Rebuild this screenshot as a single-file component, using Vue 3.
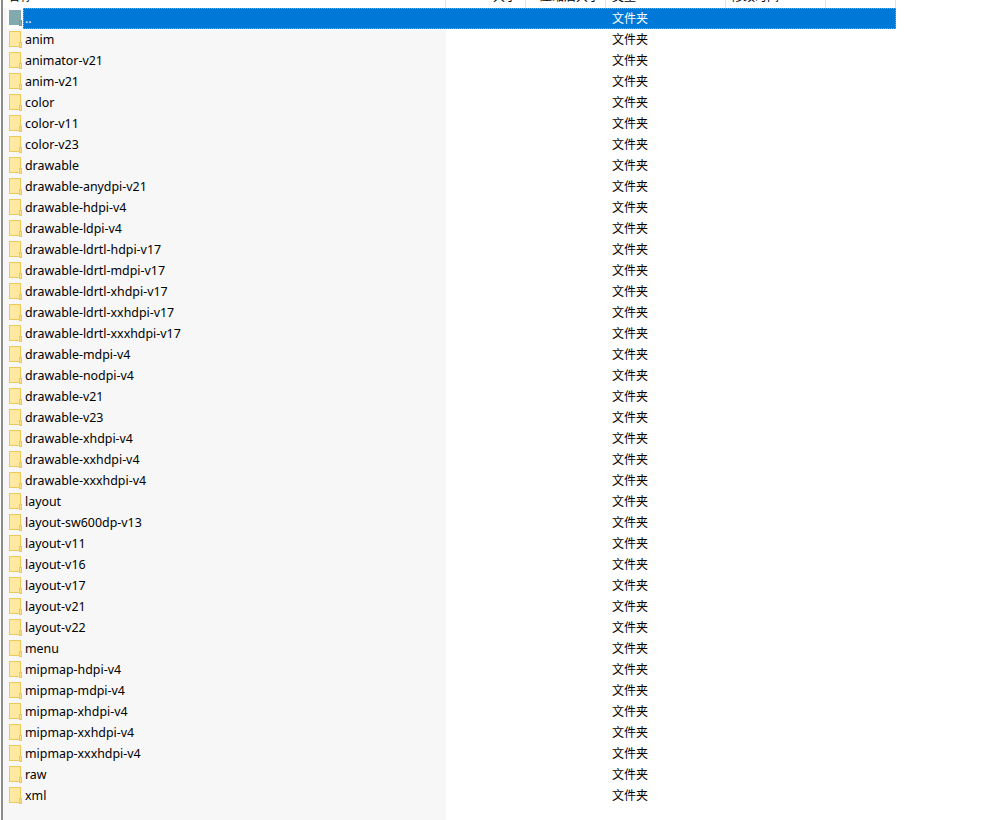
<script setup>
const names = ['anim','animator-v21','anim-v21','color','color-v11','color-v23','drawable','drawable-anydpi-v21','drawable-hdpi-v4','drawable-ldpi-v4','drawable-ldrtl-hdpi-v17','drawable-ldrtl-mdpi-v17','drawable-ldrtl-xhdpi-v17','drawable-ldrtl-xxhdpi-v17','drawable-ldrtl-xxxhdpi-v17','drawable-mdpi-v4','drawable-nodpi-v4','drawable-v21','drawable-v23','drawable-xhdpi-v4','drawable-xxhdpi-v4','drawable-xxxhdpi-v4','layout','layout-sw600dp-v13','layout-v11','layout-v16','layout-v17','layout-v21','layout-v22','menu','mipmap-hdpi-v4','mipmap-mdpi-v4','mipmap-xhdpi-v4','mipmap-xxhdpi-v4','mipmap-xxxhdpi-v4','raw','xml']
</script>

<template>
  <div class="window">
    <div class="header">
      <div class="hcell h-name"><span class="cut">名称</span></div>
      <div class="hcell h-size"><span class="cut">大小</span></div>
      <div class="hcell h-comp"><span class="cut">压缩后大小</span></div>
      <div class="hcell h-type"><span class="cut">类型</span></div>
      <div class="hcell h-date"><span class="cut">修改时间</span></div>
      <div class="hcell h-crc"></div>
    </div>
    <div class="row">
      <div class="icon-cell up-cell">
        <svg class="icon" width="14" height="16" viewBox="0 0 14 16"><rect x="0" y="0" width="12" height="15" fill="#82aaae"/><rect x="10.5" y="10.5" width="2" height="5" fill="#82aaae" stroke="#6f9ca1"/></svg>
      </div>
      <div class="body selected">
        <div class="c-name"><span class="label">..</span></div>
        <div class="c-gap"></div>
        <div class="c-type">文件夹</div>
      </div>
    </div>
    <div v-for="n in names" :key="n" class="row">
      <div class="icon-cell">
        <svg class="icon" width="14" height="17" viewBox="0 0 14 17"><rect x="0.5" y="0.5" width="11" height="15" fill="#ffe9a0" stroke="#ecc95a"/><rect x="10.5" y="11.5" width="2" height="5" fill="#ffe08a" stroke="#ecc95a"/></svg>
      </div>
      <div class="body">
        <div class="c-name"><span class="label">{{ n }}</span></div>
        <div class="c-gap"></div>
        <div class="c-type">文件夹</div>
      </div>
    </div>
    <div class="tail"></div>
  </div>
</template>

<style scoped>
.window {
  width: 997px;
  height: 820px;
  overflow: hidden;
  background: #fff;
  font-family: "Noto Sans CJK SC", "Liberation Sans", sans-serif;
  font-size: 12px;
  color: #000;
  position: relative;
  box-sizing: border-box;
  padding-left: 3px;
}
.window::before {
  content: "";
  position: absolute;
  left: 1px;
  top: 0;
  bottom: 0;
  width: 2px;
  background: #8c8c8c;
}
.header { display: flex; height: 8px; overflow: hidden; }
.hcell { border-right: 1px solid #e3e3e3; height: 8px; overflow: hidden; box-sizing: border-box; }
.cut { display: block; margin-top: -11px; line-height: 14px; font-size: 12px; }
.h-name { width: 443px; padding-left: 5px; }
.h-size { width: 80px; text-align: right; padding-right: 8px; }
.h-comp { width: 80px; text-align: right; padding-right: 5px; }
.h-type { width: 120px; padding-left: 6px; }
.h-date { width: 100px; padding-left: 5px; }
.h-crc { width: 70px; }
.row { display: flex; height: 21px; width: 893px; }
.icon-cell { width: 20px; flex: none; background: #f7f7f7; padding: 2px 0 0 6px; box-sizing: border-box; }
.up-cell { background: linear-gradient(#f7f7f7, #f7f7f7) left / 4px 100% no-repeat, #fdfdfd; }
.icon { display: block; }
.body { display: flex; flex: 1; align-items: center; min-width: 0; }
.selected { background: #0078d7; color: #fff; outline: 1px dotted #ff8c1a; outline-offset: -1px; }
.c-name { width: 423px; height: 100%; flex: none; padding-left: 2px; box-sizing: border-box; background: #f7f7f7; }
.selected .c-name { background: transparent; }
.label { font-family: "Noto Sans", "Liberation Sans", sans-serif; font-size: 12.4px; line-height: 21px; white-space: nowrap; }
.c-gap { width: 166px; flex: none; }
.c-type { flex: none; margin-top: -2px; }
.tail { height: 40px; width: 443px; background: #f7f7f7; }
</style>
